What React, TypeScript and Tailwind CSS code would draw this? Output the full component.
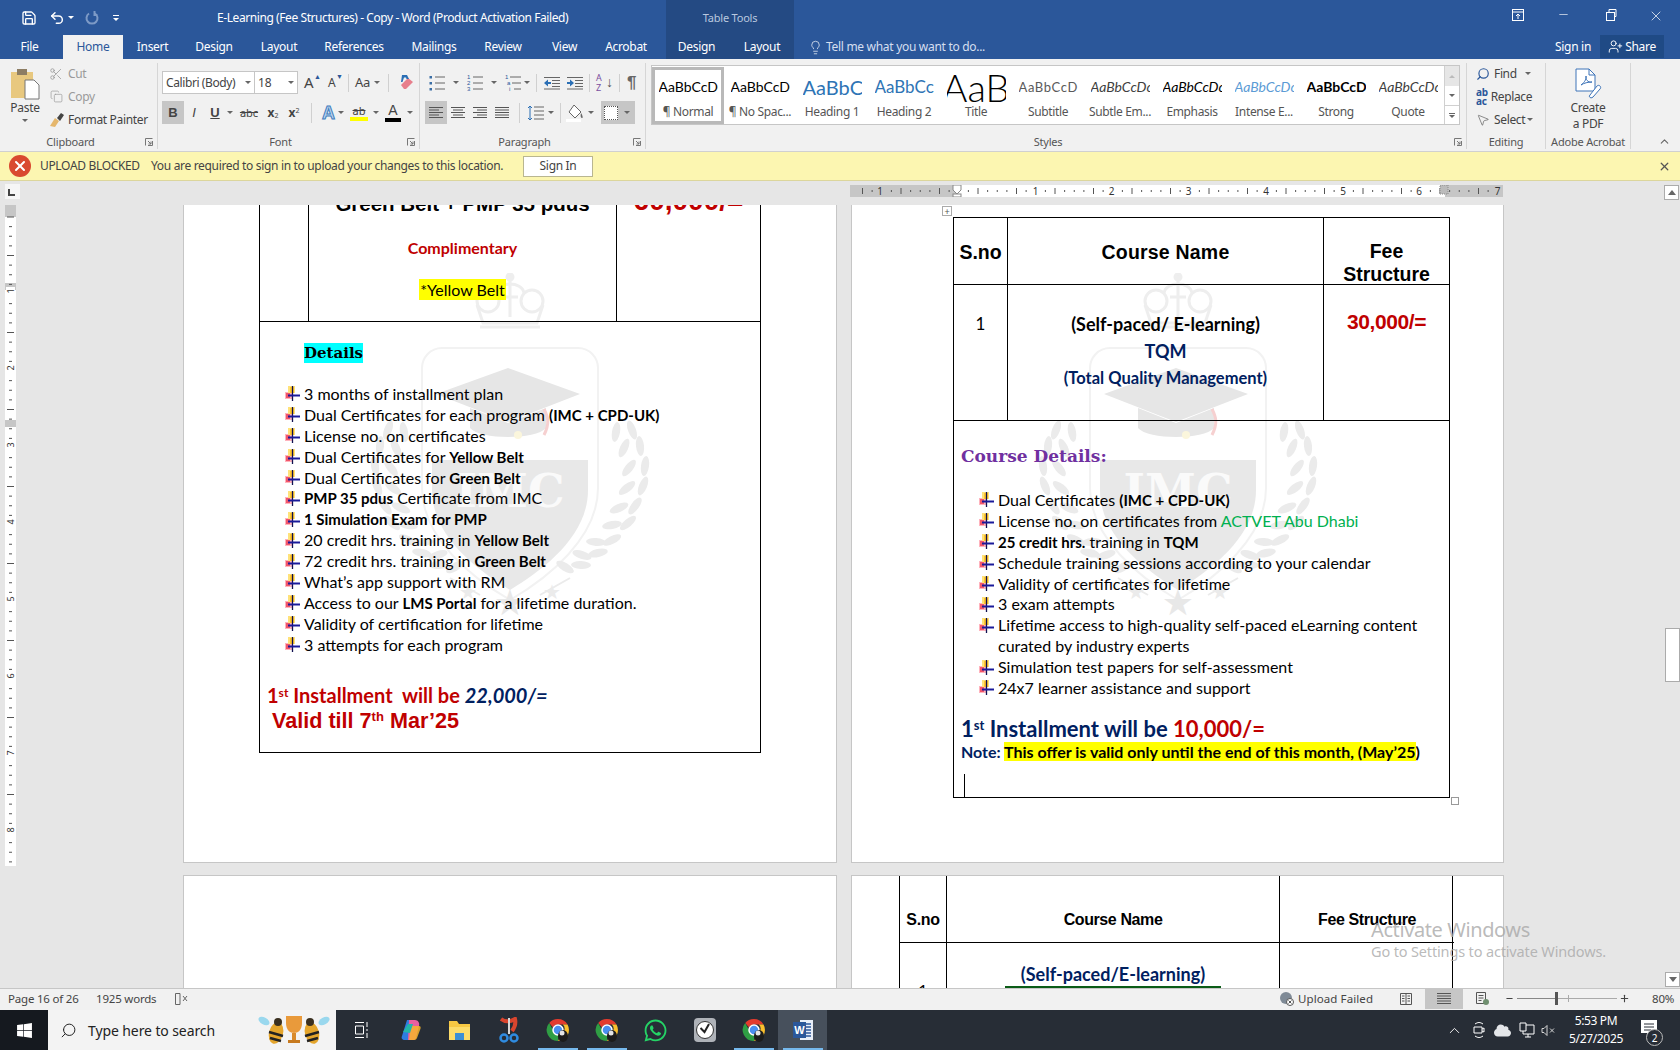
import type { ReactNode } from "react";
import {
  ChevronUp,
  Copy,
  Lightbulb,
  Minus,
  MousePointer2,
  Plus,
  Save,
  Scissors,
  Search,
  Undo2,
  UserPlus,
  X,
} from "lucide-react";
import { FaCloud, FaWhatsapp, FaWindows } from "react-icons/fa";

const UI = "font-['Noto_Sans','Open_Sans',sans-serif]";
const DOC = "font-['Lato','Carlito',sans-serif]";
const ARIAL = "font-['Liberation_Sans',Arial,sans-serif]";
const SLAB = "font-['DejaVu_Serif',serif]";

function Caret({ className = "" }: { className?: string }) {
  return <span className={`inline-block h-0 w-0 border-x-[3px] border-t-[3px] border-x-transparent border-t-[#666] ${className}`} />;
}

function TitleBar() {
  return (
    <div className={`flex h-[35px] bg-[#2b579a] text-white ${UI}`}>
      <div className="flex w-[217px] items-center pl-[21px]">
        <Save size={16} strokeWidth={2} />
        <Undo2 size={16} strokeWidth={2.2} className="ml-[12px]" />
        <Caret className="ml-[3px] border-t-white" />
        <svg width="16" height="16" viewBox="0 0 16 16" className="ml-[10px]" fill="none" stroke="#7d9ac6" strokeWidth="2">
          <path d="M5 3.5a5.5 5.5 0 1 0 6 0M10.5 1v4h3" />
        </svg>
        <span className="ml-[13px] flex flex-col items-center gap-[2px]">
          <span className="h-px w-[6px] bg-white" />
          <Caret className="border-t-white" />
        </span>
      </div>
      <div className="w-[449px] pt-[9px] text-[12px] leading-[18px] tracking-[-0.42px]">
        E-Learning (Fee Structures) - Copy - Word (Product Activation Failed)
      </div>
      <div className="w-[128px] bg-[#244a83] pt-[9px] text-center text-[11px] leading-[18px] tracking-[-0.2px] text-[#b9c8df]">
        Table Tools
      </div>
      <div className="flex flex-1 items-start justify-end pt-[8px]">
        <svg width="14" height="14" viewBox="0 0 14 14" fill="none" stroke="white" className="mr-[32px]">
          <rect x="1.5" y="1.5" width="11" height="11" />
          <path d="M1.5 4h11M7 11V6M5 8l2-2 2 2" />
        </svg>
        <Minus size={13} strokeWidth={1.2} className="mr-[34px]" />
        <svg width="14" height="14" viewBox="0 0 14 14" fill="none" stroke="white" className="mr-[30px]">
          <rect x="2.5" y="4.5" width="8" height="8" />
          <path d="M5 4.5v-3h7v7h-1.5" />
        </svg>
        <X size={16} strokeWidth={1.1} className="mr-[16px]" />
      </div>
    </div>
  );
}

const tabs = [
  ["File", "w-[63px] pr-[4px]"],
  ["Home", "w-[60px]"],
  ["Insert", "w-[59px]"],
  ["Design", "w-[64px]"],
  ["Layout", "w-[66px]"],
  ["References", "w-[84px]"],
  ["Mailings", "w-[76px]"],
  ["Review", "w-[62px]"],
  ["View", "w-[61px]"],
  ["Acrobat", "w-[62px]"],
];

function TabRow() {
  return (
    <div className={`flex h-[24px] bg-[#2b579a] text-[12px] tracking-[-0.3px] text-white ${UI}`}>
      {tabs.map(([name, width]) => (
        <div
          key={name}
          className={`${width} pt-[3px] text-center leading-[18px] ${name === "Home" ? "bg-[#f1f1f1] text-[#2b579a]" : ""}`}
        >
          {name}
        </div>
      ))}
      <div className="w-[9px]" />
      <div className="flex w-[128px] bg-[#244a83]">
        <div className="w-[61px] pt-[3px] text-center leading-[18px]">Design</div>
        <div className="w-[67px] pl-[3px] pt-[3px] text-center leading-[18px]">Layout</div>
      </div>
      <div className="flex flex-1 pt-[3px] leading-[18px]">
        <Lightbulb size={15} strokeWidth={1.3} className="ml-[14px] mt-[2px] text-[#dfe6f1]" />
        <span className="ml-[3px] w-[729px] text-[#d5dff0]">Tell me what you want to do...</span>
        <span className="w-[45px]">Sign in</span>
        <div className="-mt-[3px] flex h-[23px] w-[64px] items-center justify-center bg-[#1f4a85]">
          <UserPlus size={15} strokeWidth={1.5} />
          <span className="ml-[2px]">Share</span>
        </div>
      </div>
    </div>
  );
}

function Launcher() {
  return (
    <svg width="8" height="8" viewBox="0 0 8 8" fill="none" stroke="#777">
      <path d="M.5 7.5v-7h7M7.5 3v4.5H3M3 3l3 3M6 3.500v2.500H3.500" />
    </svg>
  );
}

function Group({ label, className, children, launcher = true }: { label: string; className: string; children: ReactNode; launcher?: boolean }) {
  return (
    <div className={`flex h-[86px] flex-col border-r border-[#d6d6d6] ${className}`}>
      <div className="relative h-[72px]">{children}</div>
      <div className={`relative mt-px flex h-[14px] items-center justify-center text-[11px] leading-[14px] tracking-[-0.2px] text-[#555] ${launcher ? "pr-[16px]" : ""}`}>
        {label}
        {launcher && (
          <span className="absolute right-[4px] top-[3px]">
            <Launcher />
          </span>
        )}
      </div>
    </div>
  );
}

function Lines({ type }: { type: "left" | "center" | "right" | "justify" }) {
  const rows = [14, 10, 14, 10, 14];
  return (
    <svg width="16" height="14" viewBox="0 0 16 14" stroke="#555">
      {rows.map((len, i) => {
        const w = type === "justify" ? 14 : len;
        const x = type === "left" || type === "justify" ? 1 : type === "center" ? 8 - w / 2 : 15 - w;
        return <line key={i} x1={x} x2={x + w} y1={1.5 + i * 2.5} y2={1.5 + i * 2.5} />;
      })}
    </svg>
  );
}

function ListGlyph({ kind }: { kind: "bullets" | "numbers" | "multi" }) {
  return (
    <svg width="18" height="18" viewBox="0 0 18 18">
      {[3, 9, 15].map((y, i) => (
        <g key={y}>
          {kind === "bullets" ? (
            <rect x="1.500" y={y - 1} width="2.500" height="2.500" fill="#3a6ea5" />
          ) : (
            <text x={kind === "multi" ? 1 + i * 2 : 1} y={y + 2} fontSize="6" fill="#2b579a" fontFamily="Liberation Sans">
              {kind === "multi" ? ["1", "a", "i"][i] : i + 1}
            </text>
          )}
          <line x1={kind === "multi" ? 6 + i * 2 : 7} x2="17" y1={y} y2={y} stroke="#666" />
        </g>
      ))}
    </svg>
  );
}

function Indent({ dir }: { dir: "in" | "out" }) {
  return (
    <svg width="18" height="14" viewBox="0 0 18 14">
      {[1.5, 4.500, 7.500, 10.500, 13].map((y, i) => (
        <line key={y} x1={i === 0 || i === 4 ? 1 : 9} x2="17" y1={y} y2={y} stroke="#666" />
      ))}
      <path d={dir === "out" ? "M1 7l4-3.500V6h3v2H5v2.500z" : "M8 7L4 3.500V6H1v2h3v2.500z"} fill="#2b6fb5" />
    </svg>
  );
}

function ClipboardGroup() {
  return (
    <Group label="Clipboard" className="w-[158px]">
      <div className="flex h-full text-[#444]">
        <div className="flex w-[50px] flex-col items-center pt-[5px]">
          <svg width="30" height="32" viewBox="0 0 30 32">
            <rect x="1" y="4" width="22" height="26" fill="#e8c87f" />
            <rect x="7" y="1" width="10" height="6" fill="#8d7d63" />
            <path d="M15 12h9l5 5v14H15z" fill="#fff" stroke="#777" />
          </svg>
          <span className="text-[12px] leading-[15px] tracking-[-0.3px]">Paste</span>
          <Caret className="mt-[4px]" />
        </div>
        <div className="-mt-[1px] flex flex-col text-[12px] leading-[23px] tracking-[-0.32px]">
          <div className="flex h-[23px] items-center text-[#9a9a9a]">
            <Scissors size={14} strokeWidth={1.4} className="ml-[-1px] mr-[5px]" />
            Cut
          </div>
          <div className="flex h-[23px] items-center text-[#9a9a9a]">
            <Copy size={13} strokeWidth={1.3} className="mr-[5px]" />
            Copy
          </div>
          <div className="flex h-[23px] items-center">
            <svg width="16" height="16" viewBox="0 0 16 16" className="mr-[3px] ml-[-1px]">
              <path d="M1 14l5-8 4 3-4 6z" fill="#e5b76d" />
              <path d="M8 6l4-5 3 2-4 6z" fill="#444" />
            </svg>
            Format Painter
          </div>
        </div>
      </div>
    </Group>
  );
}

function FontGroup() {
  return (
    <Group label="Font" className="w-[262px]">
      <div className="flex flex-col pl-[4px] pt-[8px] text-[#444]">
        <div className="flex h-[23px] items-center">
          <div className="flex h-[23px] w-[93px] items-center justify-between border border-[#c6c6c6] bg-white px-[3px] text-[12px] tracking-[-0.4px]">
            Calibri (Body)
            <Caret />
          </div>
          <div className="flex h-[23px] w-[43px] items-center justify-between border-y border-r border-[#c6c6c6] bg-white px-[3px] text-[12px]">
            18
            <Caret />
          </div>
          <span className="relative ml-[6px] w-[20px] text-[15px] leading-none">A<span className="absolute left-[10px] top-[-2px] text-[7px] text-[#2b579a]">▲</span></span>
          <span className="relative ml-[4px] w-[20px] text-[12px] leading-none">A<span className="absolute left-[8px] top-[-4px] text-[7px] text-[#2b579a]">▼</span></span>
          <span className="h-[18px] w-px bg-[#d0d0d0]" />
          <span className="ml-[6px] text-[13px] tracking-[-0.2px]">Aa</span>
          <Caret className="ml-[4px]" />
          <span className="ml-[8px] h-[18px] w-px bg-[#d0d0d0]" />
          <svg width="18" height="18" viewBox="0 0 18 18" className="ml-[10px]">
            <path d="M2 11l7-7 5 4-7 7H5z" fill="#e77f8c" />
            <path d="M3 1h5l2 4H7.500L7 3.500H5L3.500 8H2z" fill="#2b6fb5" />
          </svg>
        </div>
        <div className="mt-[7px] flex h-[23px] items-center">
          <span className={`flex h-[23px] w-[22px] items-center justify-center bg-[#c6c6c6] text-[13px] font-bold ${ARIAL}`}>B</span>
          <span className={`ml-[1px] w-[18px] text-center text-[13px] italic ${ARIAL}`}>I</span>
          <span className={`ml-[3px] w-[18px] text-center text-[13px] font-bold underline ${ARIAL}`}>U</span>
          <Caret className="ml-[3px]" />
          <span className="ml-[6px] w-[20px] text-center text-[11px] leading-none line-through">abc</span>
          <span className="ml-[2px] w-[24px] text-center text-[12px] font-bold">x<sub className="text-[7px] font-normal">2</sub></span>
          <span className="ml-[-2px] w-[22px] text-center text-[12px] font-bold">x<sup className="text-[7px] font-normal">2</sup></span>
          <span className="ml-[6px] h-[20px] w-px bg-[#d0d0d0]" />
          <span className={`ml-[10px] text-[18px] font-bold leading-none text-[#bcd4ee] [-webkit-text-stroke:1px_#3f7dbd] ${ARIAL}`}>A</span>
          <Caret className="ml-[3px]" />
          <span className="ml-[6px] flex w-[18px] flex-col items-center">
            <span className="text-[11px] leading-[12px] [text-decoration:line-through]">ab</span>
            <span className="h-[4px] w-[18px] bg-[#ffff00]" />
          </span>
          <Caret className="ml-[5px]" />
          <span className="ml-[6px] flex w-[16px] flex-col items-center">
            <span className={`text-[14px] leading-[13px] ${ARIAL}`}>A</span>
            <span className="mt-px h-[4px] w-[16px] bg-black" />
          </span>
          <Caret className="ml-[6px]" />
        </div>
      </div>
    </Group>
  );
}

function ParagraphGroup() {
  return (
    <Group label="Paragraph" className="w-[226px]">
      <div className="flex flex-col pl-[5px] pt-[8px] text-[#444]">
        <div className="flex h-[23px] items-center">
          <span className="ml-[3px]"><ListGlyph kind="bullets" /></span>
          <Caret className="ml-[7px]" />
          <span className="ml-[7px]"><ListGlyph kind="numbers" /></span>
          <Caret className="ml-[7px]" />
          <span className="ml-[7px]"><ListGlyph kind="multi" /></span>
          <Caret className="ml-[2px]" />
          <span className="ml-[6px] h-[18px] w-px bg-[#d0d0d0]" />
          <span className="ml-[6px]"><Indent dir="out" /></span>
          <span className="ml-[5px]"><Indent dir="in" /></span>
          <span className="ml-[5px] h-[18px] w-px bg-[#d0d0d0]" />
          <span className="relative ml-[6px] flex h-[20px] w-[18px] flex-col text-[9px] leading-[10px] text-[#7a4ea0]">
            <span>A</span>
            <span>Z</span>
            <span className="absolute right-[1px] top-[2px] text-[14px] leading-[14px] text-[#555]">↓</span>
          </span>
          <span className="ml-[5px] h-[18px] w-px bg-[#d0d0d0]" />
          <span className={`ml-[7px] text-[17px] font-bold leading-none text-[#666] ${ARIAL}`}>¶</span>
        </div>
        <div className="mt-[7px] flex h-[23px] items-center">
          <span className="flex h-[23px] w-[22px] items-center justify-center bg-[#c6c6c6]"><Lines type="left" /></span>
          <span className="flex w-[22px] justify-center"><Lines type="center" /></span>
          <span className="flex w-[22px] justify-center"><Lines type="right" /></span>
          <span className="flex w-[22px] justify-center"><Lines type="justify" /></span>
          <span className="ml-[6px] h-[20px] w-px bg-[#d0d0d0]" />
          <svg width="18" height="18" viewBox="0 0 18 18" className="ml-[7px]" stroke="#666">
            <path d="M3 2v14M1 4l2-2 2 2M1 14l2 2 2-2" stroke="#2b6fb5" fill="none" />
            <path d="M7 3h10M7 7h10M7 11h10M7 15h10" />
          </svg>
          <Caret className="ml-[3px]" />
          <span className="ml-[6px] h-[20px] w-px bg-[#d0d0d0]" />
          <svg width="20" height="20" viewBox="0 0 20 20" className="ml-[4px]">
            <path d="M9 2l7 7-6 6-6-6z" fill="#fff" stroke="#666" />
            <path d="M16 10c2 3 2 5 1 5s-2-2-1-5z" fill="#666" />
            <rect x="1" y="16" width="15" height="3" fill="#fff" />
          </svg>
          <Caret className="ml-[3px]" />
          <span className="ml-[7px] flex h-[23px] w-[34px] items-center justify-between bg-[#c6c6c6] pl-[3px] pr-[5px]">
            <span className="h-[14px] w-[14px] border border-dotted border-[#555] bg-white" />
            <Caret />
          </span>
        </div>
      </div>
    </Group>
  );
}

const styleItems: [string, string, string][] = [
  ["AaBbCcDc", "text-[14px] text-black", "¶ Normal"],
  ["AaBbCcDc", "text-[14px] text-black", "¶ No Spac..."],
  ["AaBbCc", "text-[20px] text-[#2e74b5]", "Heading 1"],
  ["AaBbCcD", "text-[17px] text-[#2e74b5]", "Heading 2"],
  ["AaB", "text-[38px] font-light text-black", "Title"],
  ["AaBbCcD", "text-[13px] tracking-[0.6px] text-[#5a5a5a]", "Subtitle"],
  ["AaBbCcDc", "text-[14px] italic text-[#404040]", "Subtle Em..."],
  ["AaBbCcDc", "text-[14px] italic text-black", "Emphasis"],
  ["AaBbCcDc", "text-[14px] italic text-[#5b9bd5]", "Intense E..."],
  ["AaBbCcDc", "text-[14px] font-bold text-black", "Strong"],
  ["AaBbCcDc", "text-[14px] italic text-[#404040]", "Quote"],
];

function StylesGroup() {
  return (
    <Group label="Styles" className="w-[821px]">
      <div className="ml-[5px] mt-[2px] flex h-[60px] w-[809px] border border-[#c6c6c6] bg-white">
        <div className="flex flex-1 pt-[1px]">
          {styleItems.map(([sample, cls, label], i) => (
            <div key={label} className={`flex h-[57px] w-[72px] shrink-0 flex-col items-center overflow-hidden ${i === 0 ? "border-[3px] border-[#b9b9b9]" : "border-[3px] border-transparent"}`}>
              <div className={`flex h-[34px] w-[59px] shrink-0 items-center overflow-hidden whitespace-nowrap leading-[34px] ${i === 4 ? "justify-center" : ""} ${DOC} ${cls}`}>{sample}</div>
              <div className="whitespace-nowrap text-[12px] leading-[16px] tracking-[-0.35px] text-[#555]">{label}</div>
            </div>
          ))}
        </div>
        <div className="flex w-[15px] flex-col border-l border-[#d0d0d0] text-[#666]">
          <div className="flex h-[20px] items-center justify-center bg-[#e6e6e6] text-[#bbb]"><Caret className="rotate-180 border-t-[#bbb]" /></div>
          <div className="flex h-[19px] items-center justify-center"><Caret /></div>
          <div className="flex h-[19px] flex-col items-center justify-center border-t border-[#d0d0d0]">
            <span className="mb-px h-px w-[6px] bg-[#666]" />
            <Caret />
          </div>
        </div>
      </div>
    </Group>
  );
}

function EditingGroup() {
  return (
    <Group label="Editing" className="w-[79px]" launcher={false}>
      <div className="-mt-[1px] flex flex-col pl-[9px] text-[12px] leading-[23px] tracking-[-0.35px] text-[#444]">
        <div className="flex h-[23px] items-center">
          <Search size={14} strokeWidth={2} className="mr-[4px] scale-x-[-1] text-[#2b579a]" />
          Find
          <Caret className="ml-[8px]" />
        </div>
        <div className="flex h-[23px] items-center">
          <span className="mr-[3px] flex flex-col text-[10px] font-bold leading-[9px] text-[#2b579a]"><span>ab</span><span>ac</span></span>
          Replace
        </div>
        <div className="flex h-[23px] items-center">
          <MousePointer2 size={14} strokeWidth={1} className="mr-[4px]" />
          Select
          <Caret className="ml-[2px]" />
        </div>
      </div>
    </Group>
  );
}

function AcrobatGroup() {
  return (
    <Group label="Adobe Acrobat" className="w-[85px]" launcher={false}>
      <div className="flex flex-col items-center pt-[4px] text-[12px] leading-[16px] tracking-[-0.3px] text-[#444]">
        <svg width="30" height="33" viewBox="0 0 30 33" fill="none" stroke="#3e74b8">
          <path d="M3 2h13l6 6v16H3z" fill="#fff" />
          <path d="M16 2v6h6M8 18c4-3 6-7 5-9-1 3 2 7 6 6-4 0-8 1-11 3z" />
          <path d="M17 28l7-9c2-2 5 1 3 3l-7 8c-2 2-5-0-3-2z" fill="#fff" />
        </svg>
        <span>Create</span>
        <span>a PDF</span>
      </div>
    </Group>
  );
}

function Ribbon() {
  return (
    <div className={`flex h-[93px] items-start border-b border-[#d0d0d0] bg-[#f1f1f1] pt-[4px] ${UI}`}>
      <ClipboardGroup />
      <FontGroup />
      <ParagraphGroup />
      <StylesGroup />
      <EditingGroup />
      <AcrobatGroup />
      <ChevronUp size={13} className="ml-[27px] mt-[72px] text-[#666]" />
    </div>
  );
}

function MessageBar() {
  return (
    <div className={`flex h-[29px] items-center border-b border-[#dcd69c] bg-[#fcf6b1] text-[12px] tracking-[-0.33px] text-[#444] ${UI}`}>
      <span className="ml-[9px] flex h-[22px] w-[22px] items-center justify-center rounded-full bg-[#d9492f] text-white">
        <X size={16} strokeWidth={3} />
      </span>
      <span className="ml-[9px] w-[111px]">UPLOAD BLOCKED</span>
      <span className="w-[372px]">You are required to sign in to upload your changes to this location.</span>
      <span className="flex h-[21px] w-[70px] items-center justify-center border border-[#b9b690] bg-white">Sign In</span>
      <X size={13} strokeWidth={2.4} className="ml-[1065px] text-[#555]" />
    </div>
  );
}

const hNums = [[880, "1"], [1035.5, "1"], [1111.5, "2"], [1188.5, "3"], [1266, "4"], [1343, "5"], [1419, "6"], [1497.5, "7"]] as const;

function HorizontalRuler() {
  const ticks: number[] = [];
  for (let x = 958.500 - 96; x < 1503; x += 9.625) ticks.push(x - 850);
  return (
    <svg width="653" height="12" viewBox="0 0 653 12" className="block">
      <rect width="653" height="12" fill="#c6c6c6" />
      <rect x="107" width="488" height="12" fill="#fff" />
      {ticks.map((x, i) => (
        <line key={i} x1={x} x2={x} y1={i % 4 === 0 ? 3 : 5} y2={i % 4 === 0 ? 9 : 7} stroke="#555" />
      ))}
      {hNums.map(([x, n], i) => (
        <g key={i}>
          <rect x={x - 850 - 4} y="1" width="8" height="10" fill={x < 957 || x > 1445 ? "#c6c6c6" : "#fff"} />
          <text x={x - 850} y="10" textAnchor="middle" fontSize="10" fill="#333" fontFamily="Noto Sans">{n}</text>
        </g>
      ))}
      <path d="M103 0h8v5l-4 4-4-4z" fill="#fff" stroke="#888" />
      <rect x="103" y="9" width="8" height="3" fill="#fff" stroke="#888" />
      <rect x="590" y="0" width="8" height="9" fill="#bbb" stroke="#888" strokeDasharray="1 1" />
    </svg>
  );
}

function VerticalRuler() {
  const ticks: number[] = [];
  for (let y = 217; y < 866; y += 9.625) ticks.push(y - 205);
  return (
    <svg width="11" height="661" viewBox="0 0 11 661" className="ml-[5px] block">
      <rect width="11" height="661" fill="#fff" />
      <rect width="11" height="12" fill="#c6c6c6" />
      <rect y="78" width="11" height="7" fill="#c6c6c6" />
      <rect y="215" width="11" height="7" fill="#c6c6c6" />
      {ticks.map((y, i) => (
        <line key={i} x1={i % 4 === 0 ? 2 : 4} x2={i % 4 === 0 ? 9 : 7} y1={y} y2={y} stroke="#555" />
      ))}
      {[1, 2, 3, 4, 5, 6, 7, 8].map((n) => {
        const y = 86 + (n - 1) * 77;
        return (
          <g key={n}>
            <rect x="1" y={y - 4} width="9" height="8" fill="#fff" />
            <text transform={`translate(9 ${y}) rotate(-90)`} textAnchor="middle" fontSize="9" fill="#333" fontFamily="Noto Sans">{n}</text>
          </g>
        );
      })}
    </svg>
  );
}

function Bullet() {
  return (
    <svg width="15" height="16" viewBox="0 0 15 16" className="shrink-0">
      <rect x="0" y="6" width="8" height="7" fill="#ffb3bd" />
      <rect x="1" y="7" width="4" height="5" fill="#f2566a" />
      <rect x="3" y="0" width="7" height="7" fill="#ffe27a" />
      <rect x="5" y="1" width="4" height="6" fill="#ffc62e" />
      <path d="M7.500 0v15" stroke="#101050" strokeWidth="1.300" />
      <path d="M3 9.500h12" stroke="#1a1a9a" strokeWidth="2" />
    </svg>
  );
}

function Item({ children }: { children: ReactNode }) {
  return (
    <li className="flex h-[20.9px] items-center leading-[20.9px]">
      <Bullet />
      <span className="ml-[4px] whitespace-nowrap">{children}</span>
    </li>
  );
}

const leaves = [
  [117, 157], [125, 173], [130, 193], [128, 213], [120, 233], [113, 250], [97, 267], [83, 280], [66, 292],
];

function Watermark() {
  return (
    <svg width="320" height="380" viewBox="-160 0 320 380" className="absolute left-[166px] top-[68px]">
      <g fill="none" stroke="#eeeeee" strokeWidth="3">
        <circle cx="-22" cy="28" r="11" />
        <circle cx="22" cy="28" r="11" />
        <path d="M-14 20c2-12 26-12 28 0M-33 32l6 18h54l6-18" />
        <path d="M0 0v44M-8 24h16" />
        <circle cx="0" cy="4" r="3" fill="#eeeeee" />
        <path d="M-30 54h60" />
        <path d="M-88 95c0-10 8-20 20-20h136c12 0 20 10 20 20v120c0 50-50 90-88 112-38-22-88-62-88-112z" strokeWidth="2" stroke="#f2f2f2" />
      </g>
      <path d="M-2 95l72 26-72 28-72-28z" fill="#e6e6e6" />
      <path d="M-40 135l38 15 38-15v20c-10 12-66 12-76 0z" fill="#e6e6e6" />
      <path d="M34 136c4 8 6 14 0 26" stroke="#f6d0d0" strokeWidth="3" fill="none" />
      <circle cx="8" cy="162" r="4" fill="#fbf6dc" />
      <path d="M-78 187h156v30c0 45-42 78-78 100-36-22-78-55-78-100z" fill="#e8e8e8" />
      <text x="0" y="234" textAnchor="middle" fontSize="46" fontWeight="bold" fill="#fafafa" fontFamily="DejaVu Serif">IMC</text>
      {[-1, 1].map((side) => (
        <g key={side} fill="#ebebeb">
          {leaves.map(([x, y], i) => (
            <g key={i}>
              <ellipse cx={side * (x + 5)} cy={y} rx="4" ry="10" transform={`rotate(${side * (-20 + i * 14)} ${side * (x + 5)} ${y})`} />
              <ellipse cx={side * (x - 11)} cy={y + 2} rx="4" ry="10" transform={`rotate(${side * (10 + i * 14)} ${side * (x - 11)} ${y + 2})`} />
            </g>
          ))}
          <path d={`M${side * 30} 322 L${side * 60} 305`} stroke="#ebebeb" strokeWidth="2" />
        </g>
      ))}
      <text x="0" y="342" textAnchor="middle" fontSize="36" fill="#e8e8e8" fontFamily="DejaVu Sans">★</text>
      <text x="-42" y="326" textAnchor="middle" fontSize="20" fill="#ebebeb" fontFamily="DejaVu Sans">★</text>
      <text x="42" y="326" textAnchor="middle" fontSize="20" fill="#ebebeb" fontFamily="DejaVu Sans">★</text>
    </svg>
  );
}

function LeftPage() {
  return (
    <div className={`relative h-[658px] w-[654px] overflow-hidden border-x border-b border-[#c6c6c6] bg-white text-[16px] text-black ${DOC}`}>
      <Watermark />
      <div className="relative ml-[75px] w-[502px] border-x border-b border-black">
        <div className="grid h-[117px] grid-cols-[48px_309px_1fr] border-b border-black">
          <div />
          <div className="flex flex-col items-center border-x border-black">
            <div className={`-mt-[13px] h-[24px] text-[20.500px] font-bold leading-[24px] ${ARIAL}`}>Green Belt + PMP 35 pdus</div>
            <div className="mt-[22px] h-[20px] text-[16px] font-bold leading-[20px] text-[#c00000]">Complimentary</div>
            <div className="mt-[21px] h-[21px] bg-[#ffff00] px-px text-[16px] leading-[21px]">*Yellow Belt</div>
          </div>
          <div className={`-mt-[20px] text-center text-[28px] font-bold leading-[32px] text-[#c00000] ${ARIAL}`}>60,000/=</div>
        </div>
        <div className="h-[430px] pl-[25px] pt-[18px]">
          <div className="ml-[19px]">
            <span className={`inline-block h-[20px] bg-[#00ffff] text-[15px] font-bold leading-[20px] ${SLAB}`}>Details</span>
          </div>
          <ul className="mt-[20px] [&_b]:text-[15px]">
            <Item>3 months of installment plan</Item>
            <Item>Dual Certificates for each program <b>(IMC + CPD-UK)</b></Item>
            <Item>License no. on certificates</Item>
            <Item>Dual Certificates for <b>Yellow Belt</b></Item>
            <Item>Dual Certificates for <b>Green Belt</b></Item>
            <Item><b>PMP 35 pdus</b> Certificate from IMC</Item>
            <Item><b>1 Simulation Exam for PMP</b></Item>
            <Item>20 credit hrs. training in <b>Yellow Belt</b></Item>
            <Item>72 credit hrs. training in <b>Green Belt</b></Item>
            <Item>What’s app support with RM</Item>
            <Item>Access to our <b>LMS Portal</b> for a lifetime duration.</Item>
            <Item>Validity of certification for lifetime</Item>
            <Item>3 attempts for each program</Item>
          </ul>
          <div className="-ml-[18px] mt-[27px] h-[24px] whitespace-pre text-[20px] font-bold leading-[24px] text-[#c00000]">
            1<sup className="text-[12px]">st</sup> Installment  will be <i className="text-[#002060]">22,000/=</i>
          </div>
          <div className={`-ml-[13px] mt-[2px] h-[24px] text-[21.600px] font-bold leading-[24px] text-[#c00000] ${ARIAL}`}>
            Valid till 7<sup className="text-[13px]">th</sup> Mar’25
          </div>
        </div>
      </div>
    </div>
  );
}

function RightPage() {
  return (
    <div className={`relative h-[658px] w-[653px] overflow-hidden border-x border-b border-[#c6c6c6] bg-white text-[16px] text-black ${DOC}`}>
      <Watermark />
      <span className="absolute left-[90px] top-[1px] flex h-[10px] w-[10px] items-center justify-center border border-[#aaa] bg-white text-[9px] leading-none text-[#555]">+</span>
      <span className="absolute left-[599px] top-[592px] h-[8px] w-[8px] border border-[#999] bg-white" />
      <div className="relative ml-[101px] mt-[12px] w-[497px] border border-black">
        <div className={`grid h-[67px] grid-cols-[53px_317px_1fr] border-b border-black text-[19.500px] font-bold ${ARIAL}`}>
          <div className="flex items-center justify-center pt-[2px]">S.no</div>
          <div className="flex items-center justify-center border-x border-black pt-[2px] tracking-[0.2px]">Course Name</div>
          <div className="flex flex-col items-center pt-[22px] leading-[23px]">
            <span>Fee</span>
            <span>Structure</span>
          </div>
        </div>
        <div className="grid h-[136px] grid-cols-[53px_317px_1fr] border-b border-black">
          <div className="pt-[27px] text-center text-[17px] leading-[24px]">1</div>
          <div className="flex flex-col items-center border-x border-black pt-[26px] font-bold">
            <span className="h-[27px] text-[18px] leading-[26px]">(Self-paced/ E-learning)</span>
            <span className="h-[27px] text-[18px] leading-[27px] text-[#002060]">TQM</span>
            <span className="h-[27px] text-[16.500px] leading-[27px] text-[#002060]">(Total Quality Management)</span>
          </div>
          <div className={`pt-[24px] text-center text-[21px] font-bold leading-[26px] tracking-[-0.4px] text-[#c00000] ${ARIAL}`}>30,000/=</div>
        </div>
        <div className="h-[376px] pl-[7px] pt-[23px]">
          <div className={`h-[24px] text-[17px] font-bold leading-[24px] text-[#7030a0] ${SLAB}`}>Course Details:</div>
          <ul className="ml-[18px] mt-[22px] [&_b]:text-[15px]">
            <Item>Dual Certificates <b>(IMC + CPD-UK)</b></Item>
            <Item>License no. on certificates from <span className="text-[#00b050]">ACTVET Abu Dhabi</span></Item>
            <Item><b>25 credit hrs.</b> training in <b>TQM</b></Item>
            <Item>Schedule training sessions according to your calendar</Item>
            <Item>Validity of certificates for lifetime</Item>
            <Item>3 exam attempts</Item>
            <Item>Lifetime access to high-quality self-paced eLearning content</Item>
            <li className="h-[20.9px] pl-[19px] leading-[20.9px]">curated by industry experts</li>
            <Item>Simulation test papers for self-assessment</Item>
            <Item>24x7 learner assistance and support</Item>
          </ul>
          <div className="mt-[17px] h-[25px] text-[22px] font-bold leading-[26px] text-[#002060]">
            1<sup className="text-[13px]">st</sup> Installment will be <span className="text-[#c00000]">10,000/=</span>
          </div>
          <div className="h-[20px] whitespace-nowrap text-[16px] font-bold leading-[21px] text-[#002060]">
            Note: <span className="bg-[#ffff00] text-black">This offer is valid only until the end of this month, (May’25</span><span className="text-black">)</span>
          </div>
          <div className="ml-[3px] mt-[13px] h-[23px] w-px bg-black" />
        </div>
      </div>
    </div>
  );
}

function NextPages() {
  return (
    <div className="flex h-[113px] gap-x-[14px]">
      <div className="h-[113px] w-[654px] border-x border-t border-[#c6c6c6] bg-white" />
      <div className={`h-[113px] w-[653px] overflow-hidden border-x border-t border-[#c6c6c6] bg-white ${DOC}`}>
        <div className="ml-[47px] grid w-[554px] grid-cols-[46px_334px_174px] border-x border-black">
          <div className={`flex h-[67px] items-center justify-center border-b border-black pt-[22px] text-[16px] font-bold tracking-[-0.3px] ${ARIAL}`}>S.no</div>
          <div className={`flex h-[67px] items-center justify-center border-x border-b border-black pt-[22px] text-[16px] font-bold tracking-[-0.4px] ${ARIAL}`}>Course Name</div>
          <div className={`flex h-[67px] items-center justify-center border-b border-black pt-[22px] text-[16px] font-bold tracking-[-0.4px] ${ARIAL}`}>Fee Structure</div>
          <div className="pt-[37px] text-center text-[16px] leading-[20px]">1</div>
          <div className="flex flex-col items-center border-x border-black pt-[19px]">
            <span className="h-[24px] text-[18px] font-bold leading-[24px] text-[#002060]">(Self-paced/E-learning)</span>
            <span className="h-[4px] w-[216px] bg-[#0b5c17]" />
          </div>
          <div />
        </div>
      </div>
    </div>
  );
}

function Scrollbar() {
  return (
    <div className="flex w-[16px] flex-col justify-between bg-[#e6e6e6]">
      <div className="relative h-full">
        <div className="ml-[1px] mt-[423px] h-[54px] w-[15px] border border-[#ababab] bg-white" />
      </div>
      <div className="ml-[1px] mb-[1px] flex h-[15px] w-[15px] items-center justify-center border border-[#ababab] bg-white">
        <Caret className="border-x-[4px] border-t-[5px]" />
      </div>
    </div>
  );
}

function Workspace() {
  return (
    <div className="flex h-[807px] flex-col bg-[#e6e6e6]">
      <div className="flex h-[24px]">
        <div className="ml-[5px] mt-[3px] flex h-[15px] w-[15px] items-end justify-start bg-[#f6f6f6] p-[3px]">
          <span className="h-[7px] w-[7px] border-b-2 border-l-2 border-[#444]" />
        </div>
        <div className="ml-[830px] mt-[4px]">
          <HorizontalRuler />
        </div>
        <div className="ml-[161px] mt-[4px] flex h-[15px] w-[15px] items-center justify-center border border-[#ababab] bg-white">
          <Caret className="rotate-180 border-x-[4px] border-t-[5px]" />
        </div>
      </div>
      <div className="relative flex h-[783px]">
        <div className="w-[183px]">
          <VerticalRuler />
        </div>
        <div className="flex w-[1481px] flex-col gap-y-[12px]">
          <div className="flex h-[658px] gap-x-[14px]">
            <LeftPage />
            <RightPage />
          </div>
          <NextPages />
        </div>
        <Scrollbar />
        <div className={`absolute left-[1371px] top-[711px] whitespace-nowrap text-[#a8a8a8]/80 ${UI}`}>
          <div className="text-[20px] leading-[28px] tracking-[-0.4px]">Activate Windows</div>
          <div className="-mt-[3px] text-[14.500px] leading-[20px] tracking-[-0.15px]">Go to Settings to activate Windows.</div>
        </div>
      </div>
    </div>
  );
}

function StatusBar() {
  return (
    <div className={`flex h-[22px] items-center border-t border-[#c6c6c6] bg-[#f1f1f1] pb-[2px] text-[11.500px] tracking-[-0.2px] text-[#444] ${UI}`}>
      <span className="ml-[8px] w-[88px]">Page 16 of 26</span>
      <span className="w-[78px]">1925 words</span>
      <svg width="14" height="14" viewBox="0 0 14 14" fill="none" stroke="#666">
        <path d="M6 1.500H1.500v11H6M9 4l4 5M13 4L9 9M6 1.500v11" />
      </svg>
      <svg width="15" height="15" viewBox="0 0 15 15" className="ml-[1091px]">
        <circle cx="7" cy="7" r="6" fill="#7f8a96" />
        <circle cx="11" cy="11" r="3.500" fill="#fff" stroke="#555" />
        <path d="M9.500 9.500l3 3M12.500 9.500l-3 3" stroke="#555" />
      </svg>
      <span className="ml-[4px] w-[78px] tracking-[0.1px]">Upload Failed</span>
      <svg width="14" height="14" viewBox="0 0 14 14" className="ml-[23px]" fill="none" stroke="#555">
        <path d="M1.500 1.500h11v11h-11zM7 1.500v11M3 4h2.500M3 6.500h2.500M3 9h2.500M8.500 4H11M8.500 6.500H11M8.500 9H11" />
      </svg>
      <span className="ml-[12px] flex h-[21px] w-[38px] items-center justify-center bg-[#c6c6c6]">
        <Lines type="justify" />
      </span>
      <svg width="15" height="15" viewBox="0 0 15 15" className="ml-[12px]" fill="none" stroke="#555">
        <path d="M1.500 1.500h9v11h-9zM3.500 4.500h5M3.500 7h5M3.500 9.500h3" />
        <circle cx="11" cy="11" r="3" fill="#6f8f6f" stroke="none" />
      </svg>
      <Minus size={9} strokeWidth={3} className="ml-[15px]" />
      <div className="ml-[3px] flex w-[100px] items-center">
        <span className="h-px w-[38px] bg-[#888]" />
        <span className="h-[13px] w-[3px] bg-[#555]" />
        <span className="h-px w-[10px] bg-[#aaa]" />
        <span className="h-[7px] w-px bg-[#aaa]" />
        <span className="h-px w-[48px] bg-[#aaa]" />
      </div>
      <Plus size={11} strokeWidth={2.400} className="ml-[2px]" />
      <span className="ml-[22px]">80%</span>
    </div>
  );
}

function Chrome() {
  return (
    <span className="relative inline-block h-[24px] w-[24px]">
      <svg width="24" height="24" viewBox="0 0 24 24">
        <path d="M12 1a11 11 0 0 1 9.500 5.500H12a5.500 5.500 0 0 0-5 3L3.200 5A11 11 0 0 1 12 1z" fill="#e33b2e" />
        <path d="M21.500 6.500A11 11 0 0 1 12 23l4.500-8a5.500 5.500 0 0 0 .3-8.500z" fill="#fbc02d" />
        <path d="M12 23A11 11 0 0 1 3.200 5L7.500 13a5.500 5.500 0 0 0 5 4z" fill="#2f9e44" />
        <circle cx="12" cy="12" r="5" fill="#4a8ff0" stroke="#fff" strokeWidth="1.500" />
        <ellipse cx="17" cy="18" rx="5" ry="6" fill="#1c1c1c" />
        <circle cx="16" cy="15" r="2.500" fill="#e5e5e5" />
      </svg>
    </span>
  );
}

function TaskSlot({ children, active = false, open = false }: { children: ReactNode; active?: boolean; open?: boolean }) {
  return (
    <div className={`relative flex h-[40px] w-[49px] items-center justify-center ${active ? "bg-[#47505c]" : ""}`}>
      {children}
      {open && <span className="absolute bottom-0 left-[5px] h-[2px] w-[40px] bg-[#76b9ed]" />}
    </div>
  );
}

function Taskbar() {
  return (
    <div className={`flex h-[40px] bg-[#272d36] text-white ${UI}`}>
      <div className="flex h-[40px] w-[48px] items-center justify-center bg-[#15191f]">
        <FaWindows size={17} />
      </div>
      <div className="flex h-[40px] w-[288px] items-center bg-[#f3f3f3] pl-[12px] text-[#222]">
        <Search size={17} strokeWidth={1.4} className="scale-x-[-1]" />
        <span className="ml-[11px] w-[170px] text-[14px] tracking-[-0.1px]">Type here to search</span>
        <svg width="72" height="34" viewBox="0 0 72 34">
          <path d="M28 3h16v7c0 7-4 10-8 10s-8-3-8-10z" fill="#e99a3b" />
          <rect x="34" y="20" width="4" height="7" fill="#d98a2b" />
          <rect x="30" y="27" width="12" height="3" fill="#c77a20" />
          <ellipse cx="6" cy="8" rx="6" ry="3.500" fill="#9ad8ee" transform="rotate(30 6 8)" />
          <ellipse cx="66" cy="8" rx="6" ry="3.500" fill="#9ad8ee" transform="rotate(-30 66 8)" />
          <ellipse cx="18" cy="20" rx="7" ry="11" fill="#e4a52c" transform="rotate(15 18 20)" />
          <ellipse cx="54" cy="20" rx="7" ry="11" fill="#e4a52c" transform="rotate(-15 54 20)" />
          <path d="M11 19l14 4M12 25l11 3M47 23l14-4M49 28l11-3" stroke="#222" strokeWidth="2.500" />
          <circle cx="20" cy="9" r="4" fill="#3a3020" />
          <circle cx="52" cy="9" r="4" fill="#3a3020" />
        </svg>
      </div>
      <div className="w-px" />
      <TaskSlot>
        <svg width="16" height="18" viewBox="0 0 16 18" fill="none" stroke="#fff">
          <path d="M1 1.500h9M1 16.500h9M1.500 5h8v8h-8zM13 1v5M13 8v2M13 12v5" />
        </svg>
      </TaskSlot>
      <TaskSlot>
        <svg width="24" height="24" viewBox="0 0 24 24">
          <path d="M8 2h6c2 0 3 1 3 3l-5 17H6c-3 0-4-2-3-4z" fill="#2f7be0" />
          <path d="M10 2h6c3 0 5 3 4 6l-3 12c-1 2-2 2-4 2H9z" fill="#e85fa0" />
          <path d="M12 8h8c2 0 2 2 1 4l-3 8c-1 2-2 2-4 2h-4z" fill="#f7b52c" opacity=".85" />
          <path d="M4 14l5-8h5l-3 9z" fill="#23b5a8" />
        </svg>
      </TaskSlot>
      <TaskSlot>
        <svg width="23" height="21" viewBox="0 0 23 21">
          <path d="M1 1h8l2 3h11v16H1z" fill="#f7c843" />
          <path d="M1 7h21v13H1z" fill="#fcdc6a" />
          <rect x="7" y="13" width="9" height="7" fill="#3b8fd6" />
        </svg>
      </TaskSlot>
      <TaskSlot>
        <svg width="20" height="26" viewBox="0 0 20 26" fill="none">
          <path d="M2 2c4 3 9 3 14 0 1 4 0 8-3 12" stroke="#d9452e" strokeWidth="4" />
          <path d="M10 1v16" stroke="#d9d9d9" strokeWidth="2" />
          <circle cx="5" cy="21" r="3.500" stroke="#2f8be0" strokeWidth="2.500" />
          <circle cx="15" cy="21" r="3.500" stroke="#2f8be0" strokeWidth="2.500" />
        </svg>
      </TaskSlot>
      <TaskSlot open><Chrome /></TaskSlot>
      <TaskSlot open><Chrome /></TaskSlot>
      <TaskSlot>
        <FaWhatsapp size={25} className="text-[#25d366]" />
      </TaskSlot>
      <TaskSlot>
        <svg width="24" height="26" viewBox="0 0 24 26">
          <rect x="1" y="1" width="22" height="24" rx="4" fill="#aeb2b8" />
          <circle cx="12" cy="13" r="8.500" fill="#fff" stroke="#333" />
          <path d="M7.500 11l4 4 4.500-8" stroke="#222" strokeWidth="2" fill="none" />
        </svg>
      </TaskSlot>
      <TaskSlot open><Chrome /></TaskSlot>
      <TaskSlot active open>
        <svg width="24" height="24" viewBox="0 0 24 24">
          <rect x="9" y="2" width="13" height="20" fill="#e8eef8" />
          <path d="M13 6h7M13 9h7M13 12h7M13 15h7M13 18h7" stroke="#2b579a" strokeWidth="1.500" />
          <rect x="2" y="4" width="13" height="16" fill="#2b579a" />
          <text x="8.500" y="16" textAnchor="middle" fontSize="11" fontWeight="bold" fill="#fff" fontFamily="Liberation Sans">W</text>
        </svg>
      </TaskSlot>
      <div className="flex flex-1 items-center justify-end">
        <ChevronUp size={17} strokeWidth={1.3} className="mr-[9px]" />
        <svg width="13" height="20" viewBox="0 0 13 20" fill="none" stroke="#fff" className="mr-[9px]">
          <path d="M3 4c3-2 5-2 8 0M3 16c3 2 5 2 8 0M2 7h8v6H2zM10 9l2-1v4l-2-1" />
        </svg>
        <FaCloud size={17} className="mr-[8px] text-[#e4e6e9]" />
        <svg width="16" height="18" viewBox="0 0 16 18" fill="none" stroke="#fff" className="mr-[6px]">
          <path d="M1 2h6v8H1zM7 4h8v9H4v-3M9 13v3M6 16h6" />
        </svg>
        <svg width="15" height="15" viewBox="0 0 15 15" fill="none" stroke="#d5d5d5" className="mr-[9px]">
          <path d="M1 5.500h2l3-3v10l-3-3H1zM9 5.500l4 4M13 5.500l-4 4" />
        </svg>
        <div className="flex w-[62px] flex-col items-center text-[12px] leading-[18px] tracking-[-0.35px]">
          <span>5:53 PM</span>
          <span>5/27/2025</span>
        </div>
        <span className="relative ml-[14px] mr-[23px] h-[20px] w-[16px]">
          <svg width="16" height="18" viewBox="0 0 16 18">
            <path d="M0 0h16v13h-6l-4 4v-4H0z" fill="#fff" />
            <path d="M3 4h10M3 7h10M3 10h7" stroke="#272d36" />
          </svg>
          <span className="absolute left-[5px] top-[9px] flex h-[17px] w-[17px] items-center justify-center rounded-full border border-[#bbb] bg-[#272d36] text-[10px] leading-none">2</span>
        </span>
      </div>
    </div>
  );
}

export default function App() {
  return (
    <div className="flex h-[1050px] w-[1680px] flex-col overflow-hidden">
      <TitleBar />
      <TabRow />
      <Ribbon />
      <MessageBar />
      <Workspace />
      <StatusBar />
      <Taskbar />
    </div>
  );
}
